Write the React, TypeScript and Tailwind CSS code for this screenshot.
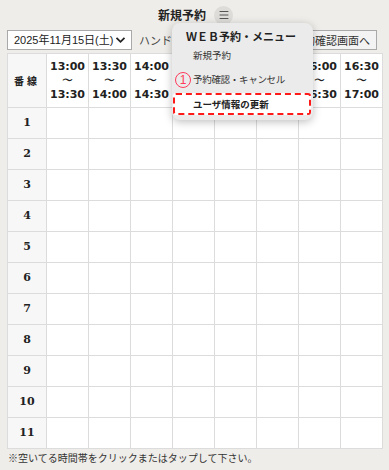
import { Menu } from 'lucide-react';

const TIMES = [
  ['13:00', '13:30'],
  ['13:30', '14:00'],
  ['14:00', '14:30'],
  ['14:30', '15:00'],
  ['15:00', '15:30'],
  ['15:30', '16:00'],
  ['16:00', '16:30'],
  ['16:30', '17:00'],
];

const LINES = Array.from({ length: 11 }, (_, i) => i + 1);

const jp = "font-['Noto_Sans_CJK_JP','Noto_Sans',sans-serif]";

export default function App() {
  return (
    <div className={`relative h-[470px] w-[389px] overflow-hidden bg-[#efede9] text-[#222] ${jp}`}>
      {/* タイトル */}
      <header className="flex h-[30px] items-center justify-center gap-[8px] pl-[2px]">
        <h1 className="text-[12px] font-bold leading-none">新規予約</h1>
        <span className="flex h-[19px] w-[19px] items-center justify-center rounded-full bg-[#dedcd8] text-[#555]">
          <Menu size={12} strokeWidth={2} />
        </span>
      </header>

      {/* 日付・操作 */}
      <div className="flex h-[20px] items-center px-[7px]">
        <div className="flex h-[20px] w-[125px] items-center justify-between whitespace-nowrap border border-[#a9a9a9] bg-white pl-[6px] pr-[5px] font-['Liberation_Sans','Noto_Sans_CJK_JP',sans-serif] text-[11px]">
          <span>2025年11月15日(土)</span>
          <svg width="11" height="8" viewBox="0 0 11 8" fill="none">
            <path d="M1.5 1.8 5.5 5.8 9.5 1.8" stroke="#222" strokeWidth="1.8" />
          </svg>
        </div>
        <span className="ml-[7px] whitespace-nowrap text-[11px] text-[#444]">ハンドル名</span>
        <button className="ml-auto mr-[5px] h-[20px] whitespace-nowrap border border-[#a9a9a9] bg-[#f3f3f3] px-[6px] text-[11px] leading-none text-[#333]">
          予約確認画面へ
        </button>
      </div>

      {/* 予約表 */}
      <table className="ml-[7px] mt-[3px] w-[375px] table-fixed border-collapse bg-white">
        <colgroup>
          <col className="w-[39px]" />
          {TIMES.map((t) => (
            <col key={t[0]} className="w-[42px]" />
          ))}
        </colgroup>
        <thead>
          <tr className="h-[54px]">
            <th className="border border-[#dcdcdc] bg-[#f7f7f7] text-[10px] font-bold tracking-[3px]">番線</th>
            {TIMES.map(([a, b]) => (
              <th
                key={a}
                className="border border-[#dcdcdc] text-center font-['DejaVu_Sans',sans-serif] text-[11px] font-bold leading-[14px]"
              >
                <div>{a}</div>
                <div className="font-normal">〜</div>
                <div>{b}</div>
              </th>
            ))}
          </tr>
        </thead>
        <tbody>
          {LINES.map((n) => (
            <tr key={n} className="h-[31px]">
              <td className="border border-[#dcdcdc] bg-[#f7f7f7] text-center font-['DejaVu_Serif',serif] text-[11px] font-bold">
                {n}
              </td>
              {TIMES.map((t) => (
                <td key={t[0]} className="border border-[#dcdcdc]" />
              ))}
            </tr>
          ))}
        </tbody>
      </table>

      <p className="ml-[8px] mt-[1px] text-[10px] text-[#333]">※空いてる時間帯をクリックまたはタップして下さい。</p>

      {/* メニュー */}
      <div className="absolute left-[172px] top-[23px] w-[141px] rounded-[8px] bg-[#ebebeb] pb-[5px] shadow-[0_2px_8px_rgba(0,0,0,0.25)]">
        <div className="flex h-[26px] items-center whitespace-nowrap pl-[14px] text-[11px] font-bold">
          ＷＥＢ予約・メニュー
        </div>
        <div className="flex h-[12px] items-center whitespace-nowrap pl-[21px] text-[9.5px] text-[#333]">新規予約</div>
        <div className="relative mt-[12px] flex h-[12px] items-center whitespace-nowrap pl-[21px] text-[9.5px] tracking-[-0.3px] text-[#333]">
          <span className="absolute left-[3px] top-[-1px] flex h-[16px] w-[16px] items-center justify-center rounded-full border border-[#ff3b5c] font-['Liberation_Sans',sans-serif] text-[12px] leading-none text-[#ff3b5c]">
            1
          </span>
          予約確認・キャンセル
        </div>
        <div className="ml-[1px] mr-[2px] mt-[8px] flex h-[22px] items-center whitespace-nowrap rounded-[3px] border-2 border-dashed border-[#ff1a1a] bg-white pl-[18px] text-[9.5px] font-bold">
          ユーザ情報の更新
        </div>
      </div>
    </div>
  );
}
